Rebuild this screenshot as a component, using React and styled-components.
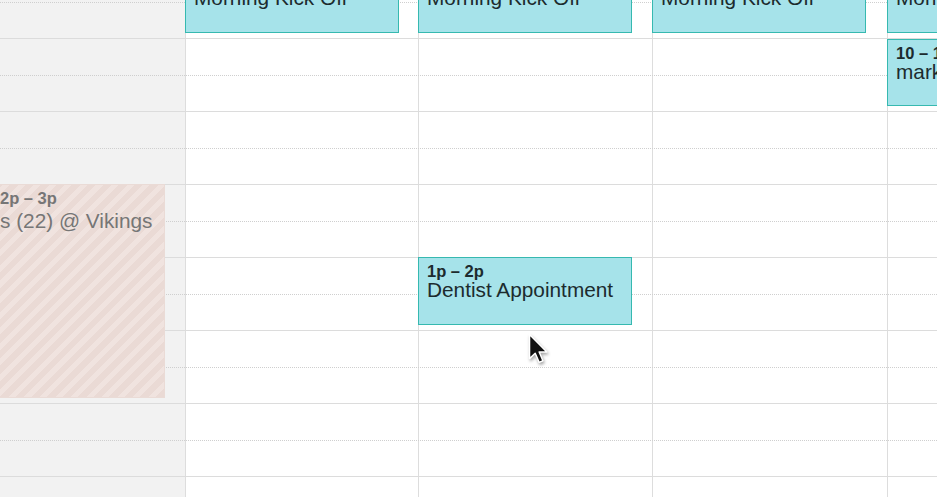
import React from 'react';
import styled, { createGlobalStyle, css } from 'styled-components';

const HOUR = 73;
const FIRST_HOUR = 9;
const SLOTS = 16;

const columns = [
  { muted: true, events: [{ start: 12, end: 15, time: '2p – 3p', title: 's (22) @ Vikings', kind: 'blocked', left: 40, width: 174 }] },
  { events: [{ start: 9, end: 10, time: '9a – 10a', title: 'Morning Kick Off' }] },
  {
    events: [
      { start: 9, end: 10, time: '9a – 10a', title: 'Morning Kick Off' },
      { start: 13, end: 14, time: '1p – 2p', title: 'Dentist Appointment' },
    ],
  },
  { events: [{ start: 9, end: 10, time: '9a – 10a', title: 'Morning Kick Off' }] },
  {
    events: [
      { start: 9, end: 10, time: '9a – 10a', title: 'Morning Kick Off' },
      { start: 10, end: 11, time: '10 – 11a', title: 'marketing sync', nudge: 1 },
    ],
  },
];

const colWidths = [234, 233, 234, 235, 234];

const App = () => {
  return (
    <>
      <GlobalStyle />
      <Page>
        <Grid>
          {columns.map((col, i) => (
            <DayBg key={`bg-${i}`} $col={i + 1} $muted={col.muted} $first={i === 0} />
          ))}

          {Array.from({ length: SLOTS }).map((_, i) => (
            <Slat key={`slat-${i}`} $row={i + 1} $half={i % 2 === 1} />
          ))}

          {columns.map((col, i) => (
            <DayEvents key={`ev-${i}`} $col={i + 1}>
              {col.events.map((ev, j) => (
                <Event
                  key={j}
                  $kind={ev.kind}
                  style={{
                    top: (ev.start - FIRST_HOUR) * HOUR + (ev.nudge || 0),
                    height: (ev.end - ev.start) * HOUR - 5 - (ev.nudge || 0),
                    left: ev.left || 0,
                    width: ev.width || 214,
                  }}
                >
                  <EventTime>{ev.time}</EventTime>
                  <EventTitle $kind={ev.kind}>{ev.title}</EventTitle>
                </Event>
              ))}
            </DayEvents>
          ))}
        </Grid>

        <Cursor width="22" height="32" viewBox="0 0 15 22">
          <path
            d="M1 1 L1 17.6 L4.9 13.9 L7.6 20.2 L10.2 19.1 L7.6 13 L12.9 13 Z"
            fill="#111"
            stroke="#fff"
            strokeWidth="1"
            strokeLinejoin="round"
          />
        </Cursor>
      </Page>
    </>
  );
};

export default App;

const GlobalStyle = createGlobalStyle`
  html, body {
    margin: 0;
    padding: 0;
    background: #fff;
  }
  body {
    font-family: "Liberation Sans", Arial, Helvetica, sans-serif;
  }
`;

const Page = styled.div`
  position: relative;
  width: 937px;
  height: 497px;
  overflow: hidden;
  background: #fff;
`;

const Grid = styled.div`
  display: grid;
  grid-template-columns: ${colWidths.map((w) => `${w}px`).join(' ')};
  grid-template-rows: repeat(${SLOTS}, ${HOUR / 2}px);
  margin: -35px 0 0 -49px;
  width: max-content;
`;

const DayBg = styled.div`
  grid-column: ${(p) => p.$col};
  grid-row: 1 / -1;
  background: ${(p) => (p.$muted ? '#f2f2f2' : '#fff')};
  border-left: ${(p) => (p.$first ? 'none' : '1px solid #dddddd')};
`;

const Slat = styled.div`
  grid-column: 1 / -1;
  grid-row: ${(p) => p.$row};
  border-top: 1px ${(p) => (p.$half ? 'dotted #cfcfcf' : 'solid #dcdcdc')};
`;

const DayEvents = styled.div`
  grid-column: ${(p) => p.$col};
  grid-row: 1 / -1;
  position: relative;
`;

const Event = styled.div`
  position: absolute;
  box-sizing: border-box;
  padding: 5px 8px 0;
  overflow: hidden;
  white-space: nowrap;
  background: #a6e3ea;
  border: 1px solid #36b9b0;
  color: #1c2b2e;

  ${(p) =>
    p.$kind === 'blocked' &&
    css`
      border: 1px solid #eadbd6;
      color: #767676;
      background: repeating-linear-gradient(
        -45deg,
        #eadad5 0px,
        #eadad5 6px,
        #f0e3df 6px,
        #f0e3df 11px
      );
    `}
`;

const EventTime = styled.div`
  font-size: 16.5px;
  font-weight: bold;
  line-height: 16px;
`;

const EventTitle = styled.div`
  font-size: 20.8px;
  line-height: 22px;
  margin-top: ${(p) => (p.$kind === 'blocked' ? '4px' : '0')};
`;

const Cursor = styled.svg`
  position: absolute;
  left: 528px;
  top: 333px;
  filter: drop-shadow(1px 2px 1.5px rgba(0, 0, 0, 0.35));
`;
